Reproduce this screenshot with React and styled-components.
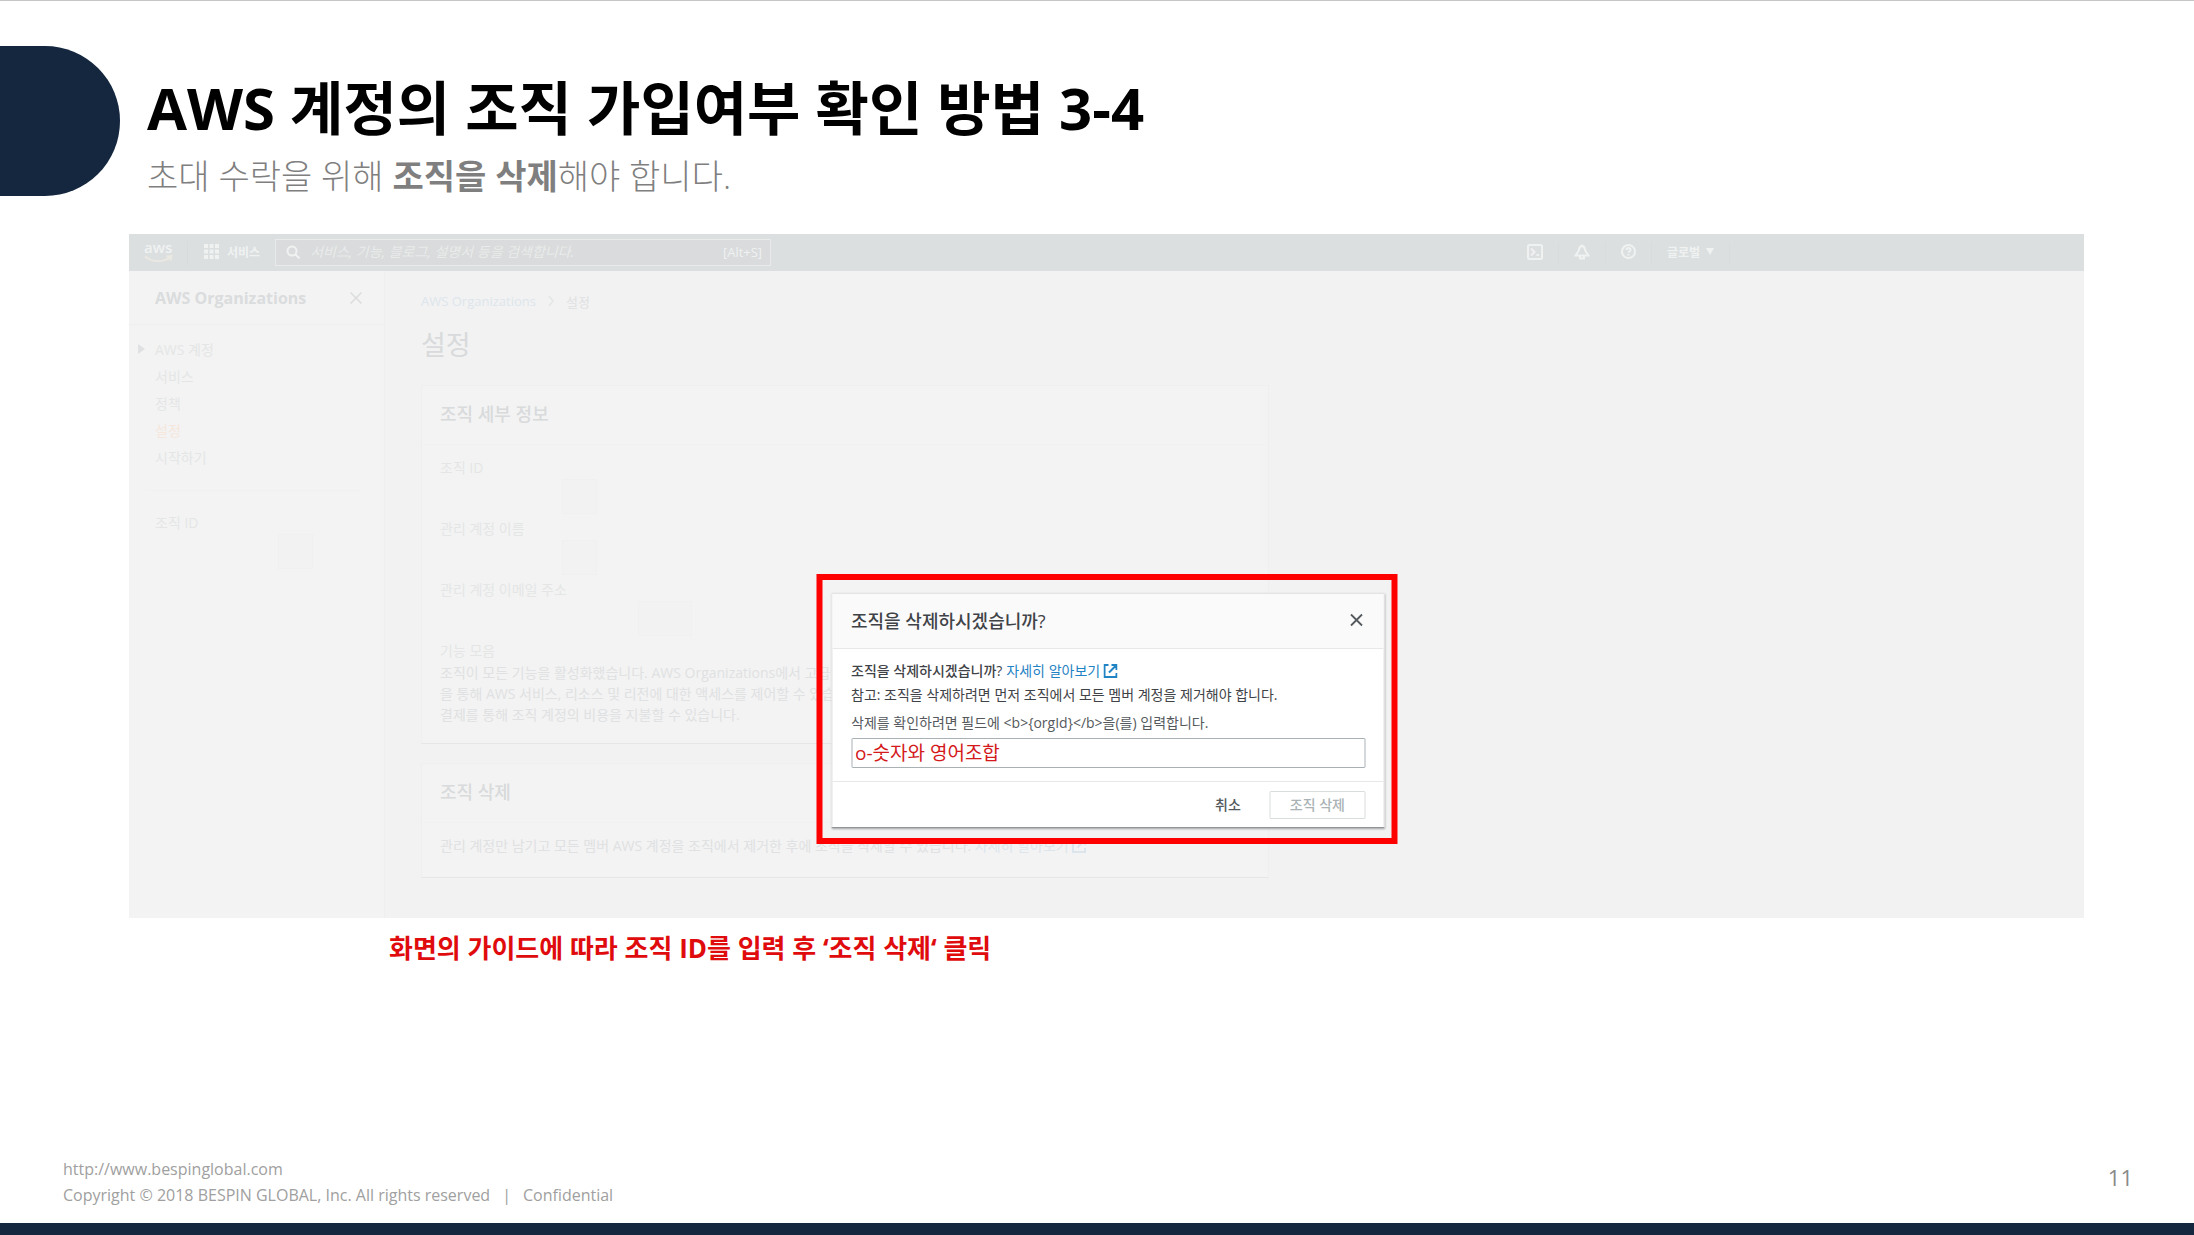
import React from "react";
import styled, { createGlobalStyle } from "styled-components";

const Global = createGlobalStyle`
  *, *::before, *::after { box-sizing: border-box; }
  body { margin: 0; background: #fff; }
  body, button, input { font-family: "Open Sans", "Noto Sans CJK KR", sans-serif; }
  h1, h2, p, ul, dl, dd { margin: 0; padding: 0; }
  ul { list-style: none; }
  a { text-decoration: none; color: inherit; }
`;

const Slide = styled.div`
  min-height: 100vh;
  display: flex;
  flex-direction: column;
  border-top: 1px solid #c6c6c6;
`;

const SlideHeader = styled.header`
  display: flex;
  gap: 27px;
  padding-top: 45px;
`;

const Tab = styled.div`
  width: 120px;
  height: 150px;
  flex: none;
  background: #14273f;
  border-radius: 0 75px 75px 0;
`;

const Titles = styled.div`
  padding-top: 24px;
`;

const Title = styled.h1`
  font-size: 58px;
  line-height: 76px;
  font-weight: 700;
  color: #000;
  white-space: nowrap;
`;

const Subtitle = styled.p`
  font-size: 34px;
  line-height: 60px;
  font-weight: 300;
  color: #7f7f7f;
  white-space: nowrap;
  b { font-weight: 700; }
`;

const Stage = styled.section`
  position: relative;
  margin: 28px 110px 0 129px;
  background: #f2f2f2;
`;

const TopBar = styled.div`
  display: flex;
  align-items: center;
  height: 37px;
  padding: 0 354px 0 15px;
  background: #dbdfe0;
  color: #f0f2f2;
  font-size: 12px;
`;

const Logo = styled.div`
  width: 44px;
  height: 24px;
  border-right: 1px solid #d8dbdc;
  display: flex;
  flex-direction: column;
  font-size: 15px;
  font-weight: 600;
  line-height: 12px;
  svg { display: block; margin-top: 2px; }
`;

const Services = styled.button`
  display: flex;
  align-items: center;
  gap: 8px;
  padding: 0 15px 2px 16px;
  border: 0;
  background: none;
  color: inherit;
  font-size: 12px;
  font-weight: 600;
`;

const Search = styled.label`
  display: flex;
  align-items: center;
  gap: 10px;
  width: 496px;
  height: 27px;
  padding: 0 8px 2px 10px;
  border: 1px solid #e9ebeb;
  background: #d9dbdc;
  font-size: 13px;
  input {
    flex: 1;
    min-width: 0;
    border: 0;
    padding: 0;
    background: none;
    font-size: 14px;
    font-style: italic;
  }
  input::placeholder { color: #e9ebeb; opacity: 1; }
`;

const Tools = styled.div`
  display: flex;
  align-items: center;
  margin-left: auto;
`;

const Tool = styled.button`
  display: flex;
  align-items: center;
  justify-content: center;
  gap: 6px;
  height: 22px;
  padding: 0 15px 2px;
  border: 0;
  border-right: 1px solid #d8dcdd;
  background: none;
  color: inherit;
  font-size: 12px;
  font-weight: 700;
`;

const Console = styled.div`
  display: flex;
  height: 647px;
`;

const SideNav = styled.nav`
  width: 256px;
  flex: none;
  background: #f3f3f3;
  border-right: 1px solid #efefef;
  color: #e4e6e6;
  font-size: 14px;
`;

const SideHead = styled.div`
  display: flex;
  align-items: center;
  justify-content: space-between;
  height: 54px;
  padding: 0 21px 0 26px;
  border-bottom: 1px solid #efefef;
  color: #dadcdd;
  font-size: 16px;
  font-weight: 700;
`;

const IconButton = styled.button`
  display: flex;
  padding: 0;
  border: 0;
  background: none;
  color: ${(p) => p.$color};
`;

const NavList = styled.ul`
  padding: 10px 0 0 9px;
`;

const NavItem = styled.li`
  display: flex;
  align-items: center;
  height: 27px;
  color: ${(p) => (p.$active ? "#f6e6dc" : "inherit")};
  svg { width: 8px; margin-right: 9px; }
  a { margin-left: ${(p) => (p.$parent ? 0 : 17)}px; }
`;

const SideId = styled.div`
  margin: 20px 24px 0 16px;
  padding: 21px 10px 0;
  border-top: 1px solid #f0f0f0;
  line-height: 22px;
`;

const Redacted = styled.div`
  width: ${(p) => p.$w}px;
  height: 35px;
  margin-left: ${(p) => p.$x}px;
  background: #f2f2f2;
  border: 1px solid #f0f0f0;
`;

const Main = styled.main`
  flex: 1;
  padding: 20px 0 0 36px;
  color: #dfe1e2;
  font-size: 14px;
`;

const Crumbs = styled.div`
  display: flex;
  align-items: center;
  gap: 12px;
  height: 20px;
  font-size: 13px;
  a { color: #dde5ec; }
`;

const PageTitle = styled.h2`
  margin-bottom: 20px;
  padding-top: 14px;
  font-size: 27px;
  line-height: 40px;
  font-weight: 400;
  color: #d8dadb;
`;

const Card = styled.section`
  width: 848px;
  margin-bottom: 19px;
  background: #f3f3f3;
  border: 1px solid #efefef;
  border-bottom-color: #e6e6e6;
`;

const CardHead = styled.h2`
  padding: 0 18px 2px;
  font-size: 18px;
  font-weight: 500;
  line-height: 56px;
  border-bottom: 1px solid #f1f1f1;
  color: #d8dadb;
`;

const CardBody = styled.div`
  padding: 12px 18px ${(p) => p.$bottom}px;
  line-height: 21px;
  white-space: nowrap;
`;

const Field = styled.dl`
  height: ${(p) => (p.$last ? 22 : 61)}px;
  color: #e4e6e6;
  line-height: 22px;
`;

const Highlight = styled.div`
  position: absolute;
  left: 50%;
  bottom: 74px;
  width: 581px;
  transform: translateX(-50%);
  padding: 13px 7px 10px 9px;
  border: 6px solid #fe0000;
`;

const Dialog = styled.form`
  background: #fff;
  border: 1px solid #e3e4e5;
  border-bottom: 1px solid #8f959b;
  box-shadow: 0 1px 2px rgba(0, 0, 0, 0.35);
  color: #3f4347;
  font-size: 14px;
`;

const DialogHead = styled.div`
  display: flex;
  align-items: center;
  justify-content: space-between;
  height: 55px;
  padding: 0 20px 2px 19px;
  background: #fafafa;
  border-bottom: 1px solid #e8e8e8;
  font-size: 18px;
  font-weight: 500;
`;

const DialogBody = styled.div`
  padding: 10px 18px 13px 19px;
  line-height: 24px;
  white-space: nowrap;
  label { display: block; padding-top: 4px; color: #55595d; }
`;

const Question = styled.p`
  display: flex;
  align-items: center;
  gap: 4px;
  font-weight: 500;
`;

const LearnMore = styled.a`
  display: inline-flex;
  align-items: center;
  gap: 3px;
  font-weight: 400;
  color: ${(p) => p.$color};
`;

const IdInput = styled.input`
  display: block;
  width: 100%;
  height: 30px;
  margin-top: 3px;
  padding: 0 3px 2px;
  border: 1px solid #a9b1b5;
  border-radius: 1px;
  color: #d4191b;
  font-size: 19px;
  font-weight: 400;
`;

const DialogFoot = styled.div`
  display: flex;
  align-items: center;
  justify-content: flex-end;
  height: 46px;
  padding: 0 18px;
  border-top: 1px solid #e8e8e8;
`;

const Action = styled.button`
  height: 28px;
  padding: 0 ${(p) => (p.$outlined ? 19 : 28)}px 2px;
  border: 1px solid ${(p) => (p.$outlined ? "#d9dddd" : "transparent")};
  border-radius: 1px;
  background: none;
  color: ${(p) => (p.$outlined ? "#a9b3b5" : "#54595d")};
  font-size: 14px;
  font-weight: 500;
  white-space: nowrap;
`;

const Caption = styled.p`
  margin: 12px 0 0 389px;
  color: #e00b0d;
  font-size: 26px;
  line-height: 36px;
  font-weight: 700;
`;

const SlideFooter = styled.footer`
  display: flex;
  align-items: center;
  justify-content: space-between;
  margin-top: auto;
  padding: 0 61px 15px 63px;
  border-bottom: 12px solid #14273f;
  color: #a0a0a0;
  font-size: 16px;
  line-height: 26px;
`;

const FooterLine = styled.div`
  display: flex;
  gap: ${(p) => p.$gap || 0}px;
`;

const PageNumber = styled.div`
  padding-bottom: 10px;
  color: #8a8a8a;
  font-size: 22px;
`;

const Close = ({ size, width }) => (
  <svg width={size} height={size} viewBox="0 0 14 14" fill="none" stroke="currentColor" strokeWidth={width}>
    <path d="M1.5 1.5 12.5 12.5M12.5 1.5 1.5 12.5" />
  </svg>
);

const External = () => (
  <svg width="14" height="14" viewBox="0 0 14 14" fill="none" stroke="currentColor" strokeWidth="2">
    <path d="M5 1H1v12h12V9M8 1h5v5M13 1 5.5 8.5" />
  </svg>
);

const Grid = () => (
  <svg width="15" height="15" viewBox="0 0 15 15" fill="currentColor">
    {[0, 5.5, 11].map((y) => [0, 5.5, 11].map((x) => <rect key={x + "-" + y} x={x} y={y} width="4" height="4" />))}
  </svg>
);

const navItems = [
  { label: "AWS 계정", parent: true },
  { label: "서비스" },
  { label: "정책" },
  { label: "설정", active: true },
  { label: "시작하기" },
];

const fields = [
  { label: "조직 ID", x: 122, w: 35 },
  { label: "관리 계정 이름", x: 122, w: 35 },
  { label: "관리 계정 이메일 주소", x: 198, w: 54 },
];

export default function App() {
  return (
    <Slide>
      <Global />
      <SlideHeader>
        <Tab />
        <Titles>
          <Title>AWS 계정의 조직 가입여부 확인 방법 3-4</Title>
          <Subtitle>
            초대 수락을 위해 <b>조직을 삭제</b>해야 합니다.
          </Subtitle>
        </Titles>
      </SlideHeader>

      <Stage>
        <TopBar>
          <Logo>
            aws
            <svg width="29" height="8" viewBox="0 0 29 8" fill="none" stroke="#ebe8e2" strokeWidth="2">
              <path d="M1 1.5C8 7.5 19 7.5 26 2.5M22.5 1.5 27.5 1 26.5 5.5" />
            </svg>
          </Logo>
          <Services type="button">
            <Grid />
            서비스
          </Services>
          <Search>
            <svg width="14" height="14" viewBox="0 0 14 14" fill="none" stroke="currentColor" strokeWidth="2">
              <circle cx="6" cy="6" r="4.5" />
              <path d="m9.5 9.5 4 4" />
            </svg>
            <input type="search" aria-label="검색" placeholder="서비스, 기능, 블로그, 설명서 등을 검색합니다." />
            <span>[Alt+S]</span>
          </Search>
          <Tools>
            <Tool type="button" aria-label="CloudShell">
              <svg width="16" height="16" viewBox="0 0 16 16" fill="none" stroke="currentColor" strokeWidth="2">
                <rect x="1" y="1" width="14" height="14" rx="1.5" />
                <path d="m4 4.5 3.5 3.5L4 11.500M9.500 11h2.500" />
              </svg>
            </Tool>
            <Tool type="button" aria-label="알림">
              <svg width="16" height="16" viewBox="0 0 16 16" fill="none" stroke="currentColor" strokeWidth="2">
                <path d="M8 1.5C6 2.5 5 4 4.8 6.5L1.5 11.5h13L11.2 6.5C11 4 10 2.5 8 1.5ZM6 12v2.5h4V12" />
              </svg>
            </Tool>
            <Tool type="button" aria-label="도움말">
              <svg width="15" height="15" viewBox="0 0 15 15" fill="none" stroke="currentColor" strokeWidth="2">
                <circle cx="7.5" cy="7.5" r="6.5" />
                <path d="M5.5 6c0-2.6 4-2.6 4 0 0 1.3-2 1.3-2 2.8M7.5 10v1.6" />
              </svg>
            </Tool>
            <Tool type="button">
              글로벌
              <svg width="8" height="7" viewBox="0 0 8 7" fill="currentColor">
                <path d="M0 0h8L4 7z" />
              </svg>
            </Tool>
          </Tools>
        </TopBar>

        <Console>
          <SideNav>
            <SideHead>
              AWS Organizations
              <IconButton type="button" aria-label="탐색 닫기" $color="#dadcdd">
                <Close size={14} width={1.5} />
              </IconButton>
            </SideHead>
            <NavList>
              {navItems.map((item) => (
                <NavItem key={item.label} $active={item.active} $parent={item.parent}>
                  {item.parent && (
                    <svg height="10" viewBox="0 0 8 10" fill="#dfe1e2">
                      <path d="M0 0v10l7-5z" />
                    </svg>
                  )}
                  <a href="#nav">{item.label}</a>
                </NavItem>
              ))}
            </NavList>
            <SideId>
              조직 ID
              <Redacted $w={35} $x={123} />
            </SideId>
          </SideNav>

          <Main>
            <Crumbs>
              <a href="#organizations">AWS Organizations</a>
              <svg width="6" height="12" viewBox="0 0 6 12" fill="none" stroke="#e2e4e5" strokeWidth="1.3">
                <path d="m1 1 4 5-4 5" />
              </svg>
              <span>설정</span>
            </Crumbs>
            <PageTitle>설정</PageTitle>
            <Card>
              <CardHead>조직 세부 정보</CardHead>
              <CardBody $bottom={18}>
                {fields.map((f) => (
                  <Field key={f.label}>
                    <dt>{f.label}</dt>
                    <dd>
                      <Redacted $w={f.w} $x={f.x} />
                    </dd>
                  </Field>
                ))}
                <Field $last>
                  <dt>기능 모음</dt>
                </Field>
                <p>
                  조직이 모든 기능을 활성화했습니다. AWS Organizations에서 고급 중
                  <br />
                  을 통해 AWS 서비스, 리소스 및 리전에 대한 액세스를 제어할 수 있습니
                  <br />
                  결제를 통해 조직 계정의 비용을 지불할 수 있습니다.
                </p>
              </CardBody>
            </Card>
            <Card>
              <CardHead>조직 삭제</CardHead>
              <CardBody $bottom={21}>
                관리 계정만 남기고 모든 멤버 AWS 계정을 조직에서 제거한 후에 조직을 삭제할 수 있습니다.{" "}
                <LearnMore href="#learn" $color="#dde5ec">
                  자세히 알아보기 <External />
                </LearnMore>
              </CardBody>
            </Card>
          </Main>
        </Console>

        <Highlight>
          <Dialog onSubmit={(e) => e.preventDefault()}>
            <DialogHead>
              조직을 삭제하시겠습니까?
              <IconButton type="button" aria-label="닫기" $color="#54595d">
                <Close size={14} width={1.8} />
              </IconButton>
            </DialogHead>
            <DialogBody>
              <Question>
                조직을 삭제하시겠습니까?
                <LearnMore href="#learn" $color="#1f83c4">
                  자세히 알아보기 <External />
                </LearnMore>
              </Question>
              <p>참고: 조직을 삭제하려면 먼저 조직에서 모든 멤버 계정을 제거해야 합니다.</p>
              <label htmlFor="org-id">{"삭제를 확인하려면 필드에 <b>{orgId}</b>을(를) 입력합니다."}</label>
              <IdInput id="org-id" type="text" defaultValue="o-숫자와 영어조합" />
            </DialogBody>
            <DialogFoot>
              <Action type="button">취소</Action>
              <Action type="submit" $outlined>
                조직 삭제
              </Action>
            </DialogFoot>
          </Dialog>
        </Highlight>
      </Stage>

      <Caption>화면의 가이드에 따라 조직 ID를 입력 후 ‘조직 삭제‘ 클릭</Caption>

      <SlideFooter>
        <div>
          <FooterLine>
            <a href="http://www.bespinglobal.com">http://www.bespinglobal.com</a>
          </FooterLine>
          <FooterLine $gap={12}>
            <span>Copyright © 2018 BESPIN GLOBAL, Inc. All rights reserved</span>
            <span>|</span>
            <span>Confidential</span>
          </FooterLine>
        </div>
        <PageNumber>11</PageNumber>
      </SlideFooter>
    </Slide>
  );
}
